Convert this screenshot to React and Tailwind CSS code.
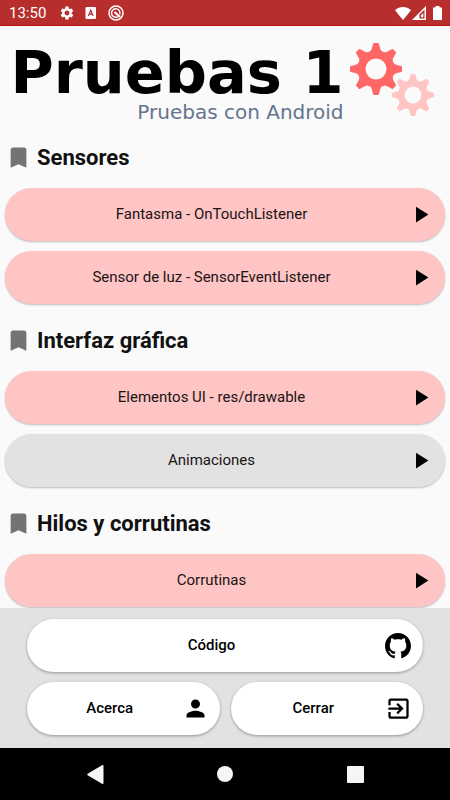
import React from "react";
import { MdBookmark, MdExitToApp, MdPerson, MdPlayArrow, MdSettings } from "react-icons/md";

const sections = [
  {
    title: "Sensores",
    items: [
      { label: "Fantasma - OnTouchListener", active: true },
      { label: "Sensor de luz - SensorEventListener", active: true },
    ],
  },
  {
    title: "Interfaz gráfica",
    items: [
      { label: "Elementos UI - res/drawable", active: true },
      { label: "Animaciones", active: false },
    ],
  },
  {
    title: "Hilos y corrutinas",
    items: [{ label: "Corrutinas", active: true }],
  },
];

const teeth = [0, 45, 90, 135, 180, 225, 270, 315];

function Gear({ className }) {
  return (
    <svg viewBox="-26 -26 52 52" className={className} fill="currentColor" aria-hidden="true">
      <circle r="14.5" fill="none" stroke="currentColor" strokeWidth="8" />
      {teeth.map((angle) => (
        <path
          key={angle}
          transform={`rotate(${angle})`}
          d="M-8.5 -15.500 Q-5 -17.500 -4.300 -20 L-2.900 -25.200 Q-2.700 -26 -1.900 -26 H1.900 Q2.700 -26 2.900 -25.200 L4.300 -20 Q5 -17.500 8.500 -15.500 Z"
        />
      ))}
    </svg>
  );
}

function StatusBar() {
  return (
    <header className="flex h-[26px] shrink-0 items-center border-b border-[#b3150f] bg-[#b82e2c] pl-[9px] pr-2 pt-px text-white">
      <span className="w-[50px] text-[15px]">13:50</span>
      <MdSettings className="mr-[10px] size-4" />
      <svg viewBox="0 0 12 12" className="mr-[11px] size-3" aria-hidden="true">
        <rect x="0.5" y="0" width="10.5" height="12" rx="1" fill="#fff" />
        <path d="M3.4 9 5.75 3.2 8.1 9M4.2 7.2h3.1" fill="none" stroke="#b82e2c" strokeWidth="1.2" />
      </svg>
      <svg viewBox="0 0 16 16" className="size-4" fill="none" stroke="#fff" aria-hidden="true">
        <circle cx="8" cy="8" r="7" strokeWidth="1.5" />
        <path d="M11.7 9.5A4.200 4.200 0 1 0 8 12.200H10" strokeWidth="1.4" />
        <path d="M6.5 7 12 12" strokeWidth="2.2" />
      </svg>
      <div className="ml-auto flex items-center gap-px">
        <svg viewBox="0 0 16 13" className="h-[13px] w-4" fill="#fff" aria-hidden="true">
          <path d="M8 13 0 3.200C4.500-1 11.500-1 16 3.200Z" />
        </svg>
        <svg viewBox="0 0 14 14" className="size-[14px]" aria-hidden="true">
          <path d="M0 14 14 0V14Z" fill="#fff" />
          <path d="M7.500 12.500V8.500L12.500 3.500V12.500Z" fill="#b82e2c" />
          <path d="M9 11.300V9.200L11.300 7V11.300Z" fill="#fff" />
        </svg>
        <svg viewBox="0 0 9 14" className="ml-[6px] h-[14px] w-[9px]" fill="#fff" aria-hidden="true">
          <path d="M2.500 0h4v1.500H9V14H0V1.500h2.500Z" />
        </svg>
      </div>
    </header>
  );
}

function Banner() {
  return (
    <div className="flex justify-center pb-[6px] pr-[6px] pt-[17px] font-['DejaVu_Sans',sans-serif]">
      <div className="flex flex-col items-end">
        <h1 className="text-[59px] leading-[60px] font-bold text-black">Pruebas 1</h1>
        <p className="text-[20px] leading-[18px] text-[#64748f]">Pruebas con Android</p>
      </div>
      <div className="flex flex-col pl-[6px]">
        <Gear className="size-[52px] text-[#ff6666]" />
        <Gear className="-mt-[21px] ml-[42px] size-[42px] text-[#ffc4c4]" />
      </div>
    </div>
  );
}

function ListButton({ label, active }) {
  return (
    <button
      className={`flex h-[53px] w-full items-center rounded-full px-[11px] text-[15px] text-[#1a1414] shadow-[0_1px_2px_rgba(0,0,0,0.25)] ${
        active ? "bg-[#ffc4c4]" : "bg-[#e2e2e2]"
      }`}
    >
      <span className="flex-1 text-center">{label}</span>
      <MdPlayArrow className="size-[27px] text-black" />
    </button>
  );
}

function ActionButton({ label, children }) {
  return (
    <button className="flex h-[53px] flex-1 items-center rounded-full bg-white px-[11px] text-[15px] font-medium text-black shadow-[0_1px_3px_rgba(0,0,0,0.35)]">
      <span className="flex-1 text-center">{label}</span>
      {children}
    </button>
  );
}

function GithubMark() {
  return (
    <svg viewBox="0 0 16 16" className="mr-px size-[26px]" fill="currentColor" aria-hidden="true">
      <path d="M8 0C3.580 0 0 3.580 0 8c0 3.540 2.290 6.530 5.470 7.590.4.070.55-.17.55-.38 0-.19-.01-.82-.01-1.490-2.010.37-2.530-.49-2.690-.94-.09-.23-.48-.94-.82-1.130-.28-.15-.68-.52-.01-.53.63-.01 1.080.58 1.230.82.72 1.210 1.870.87 2.330.66.07-.52.28-.87.51-1.070-1.780-.2-3.640-.89-3.640-3.950 0-.87.31-1.590.82-2.150-.08-.2-.36-1.020.08-2.120 0 0 .67-.21 2.200.82.64-.18 1.320-.27 2-.27s1.360.09 2 .27c1.530-1.040 2.200-.82 2.200-.82.44 1.100.16 1.920.08 2.120.51.56.82 1.270.82 2.150 0 3.070-1.870 3.750-3.650 3.950.29.25.54.73.54 1.480 0 1.070-.01 1.930-.01 2.200 0 .21.15.46.55.38A8.010 8.010 0 0 0 16 8c0-4.420-3.580-8-8-8Z" />
    </svg>
  );
}

export default function App() {
  return (
    <div className="flex h-screen flex-col bg-[#fafafa] font-[Roboto,sans-serif]">
      <StatusBar />
      <main className="min-h-0 flex-1 overflow-hidden">
        <Banner />
        {sections.map((section) => (
          <section key={section.title} className="px-[5px] pb-[6px]">
            <h2 className="flex h-[61px] items-center gap-[5px] text-[22px] font-bold text-[#111]">
              <MdBookmark className="size-[27px] text-[#737373]" />
              {section.title}
            </h2>
            <div className="flex flex-col gap-[10px]">
              {section.items.map((item) => (
                <ListButton key={item.label} {...item} />
              ))}
            </div>
          </section>
        ))}
      </main>
      <footer className="flex shrink-0 flex-col gap-[10px] bg-[#e2e2e2] px-[27px] pb-[13px] pt-[11px]">
        <div className="flex">
          <ActionButton label="Código">
            <GithubMark />
          </ActionButton>
        </div>
        <div className="flex gap-[11px]">
          <ActionButton label="Acerca">
            <MdPerson className="size-[27px]" />
          </ActionButton>
          <ActionButton label="Cerrar">
            <MdExitToApp className="size-[27px]" />
          </ActionButton>
        </div>
      </footer>
      <nav className="flex h-[52px] shrink-0 items-center justify-center gap-[103px] bg-black text-[#f5f5f5]">
        <button aria-label="Atrás" className="flex w-[27px] justify-center">
          <svg viewBox="0 0 17 19" className="h-[19px] w-[17px]" fill="currentColor" aria-hidden="true">
            <path d="M.6 8.800 15 .3Q16.500-.3 16.500 1V18Q16.500 19.300 15 18.700L.6 10.200Q-.2 9.500.6 8.800Z" />
          </svg>
        </button>
        <button aria-label="Inicio" className="flex w-[27px] justify-center">
          <span className="size-4 rounded-full bg-current" />
        </button>
        <button aria-label="Recientes" className="flex w-[27px] justify-center">
          <span className="size-[17px] rounded-[1px] bg-current" />
        </button>
      </nav>
    </div>
  );
}
